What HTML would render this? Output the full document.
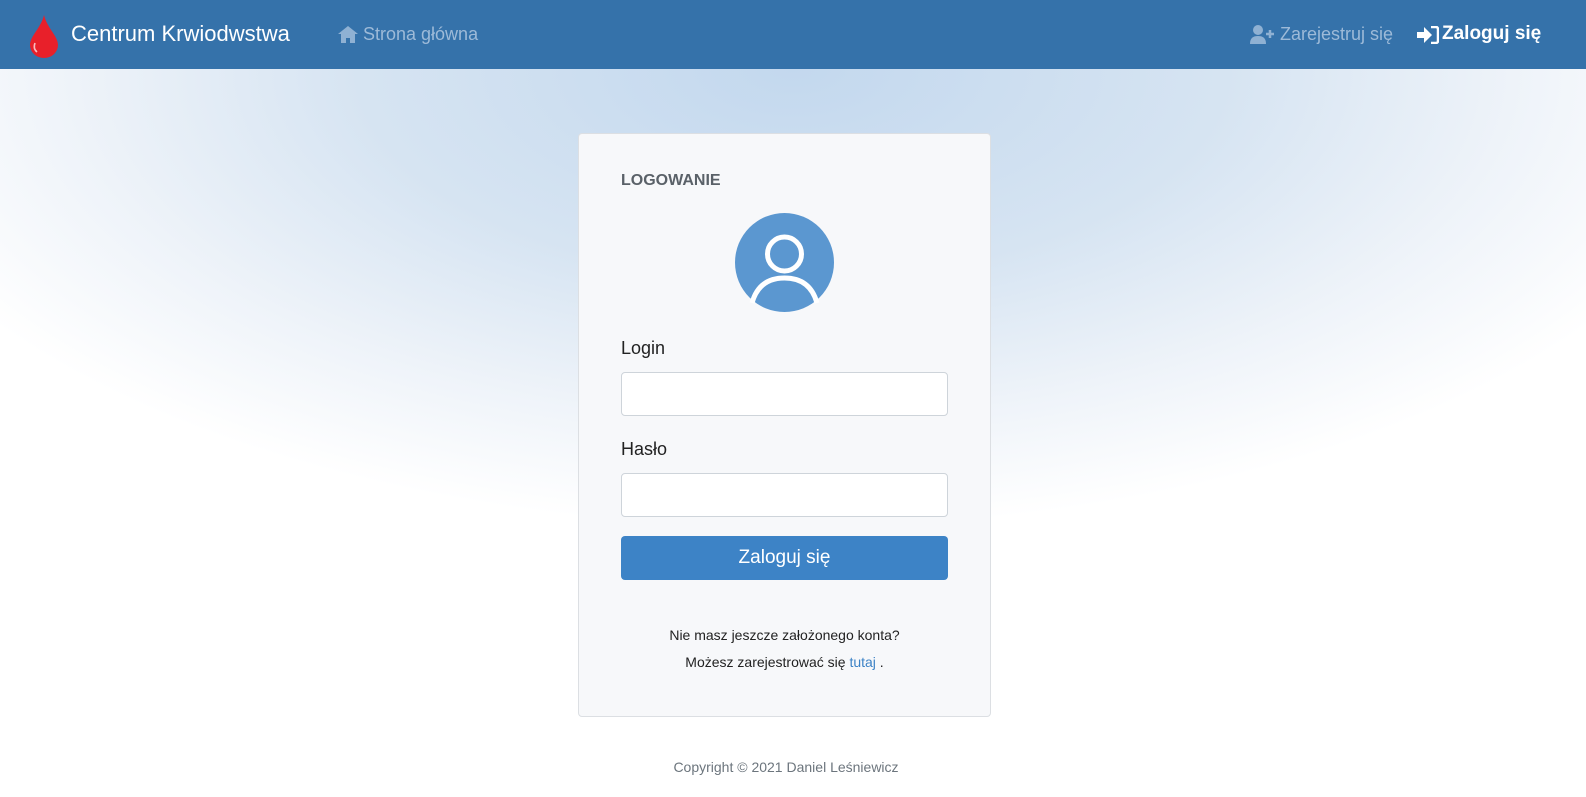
<!DOCTYPE html>
<html><head><meta charset="utf-8"><style>
*{box-sizing:border-box;margin:0;padding:0}
body{width:1586px;height:797px;overflow:hidden;font-family:"Segoe UI","Liberation Sans",sans-serif;background:#fff;position:relative}
.bg{position:absolute;left:0;top:69px;width:1586px;height:728px;background:radial-gradient(ellipse 960px 460px at 793px 0px,#c3d8ee 0%,#d6e4f2 45%,#eef3f9 75%,#fff 100%)}
nav{position:absolute;left:0;top:0;width:1586px;height:69px;background:#3572aa;color:#fff}
.t{position:absolute;white-space:nowrap}
.card{position:absolute;left:578px;top:133px;width:413px;height:584px;background:#f7f8fa;border:1px solid #dcdfe3;border-radius:4px}
.inp{position:absolute;left:621px;width:327px;height:44px;background:#fff;border:1px solid #ced4da;border-radius:4px}
</style></head><body>
<div class="bg"></div>
<nav>
<svg class="t" style="left:28px;top:14px" width="32" height="44" viewBox="0 0 32 44"><path d="M16 1C13 14 2 22 2 31a14 13 0 0 0 28 0C30 22 19 14 16 1z" fill="#e8202a"/><path d="M7 29c-1.5 4-0.5 7 2 9" stroke="#fff" stroke-width="1.6" fill="none" opacity=".7"/></svg>
<div class="t" style="left:71px;top:21px;font-size:22px">Centrum Krwiodwstwa</div>
<svg class="t" style="left:338px;top:26px" width="20" height="17" viewBox="0 0 20 17"><path d="M10 0L0 8h3v9h5v-5h4v5h5V8h3z" fill="#8fb1d3"/></svg>
<div class="t" style="left:363px;top:24px;font-size:18px;color:#9dbad8">Strona główna</div>
<svg class="t" style="left:1250px;top:25px" width="26" height="19" viewBox="0 0 26 19"><circle cx="8" cy="5" r="5" fill="#8fb1d3"/><path d="M0 19c0-6 3-8 8-8s8 2 8 8z" fill="#8fb1d3"/><path d="M20 5v8M16 9h8" stroke="#8fb1d3" stroke-width="2.5"/></svg>
<div class="t" style="left:1280px;top:24px;font-size:18px;color:#9dbad8">Zarejestruj się</div>
<svg class="t" style="left:1417px;top:26px" width="22" height="18" viewBox="0 0 22 18"><path d="M0 6h7V1l8 8-8 8v-5H0z" fill="#fff"/><path d="M14 1h5a2 2 0 0 1 2 2v12a2 2 0 0 1-2 2h-5" stroke="#fff" stroke-width="2.5" fill="none"/></svg>
<div class="t" style="left:1442px;top:23px;font-size:19px;font-weight:bold">Zaloguj się</div>
</nav>
<div class="card"></div>
<div class="t" style="left:621px;top:172px;font-size:16px;font-weight:bold;color:#5a6168">LOGOWANIE</div>
<svg class="t" style="left:735px;top:213px" width="99" height="99" viewBox="0 0 99 99"><circle cx="49.5" cy="49.5" r="49.5" fill="#5b97d0"/><circle cx="49.5" cy="41" r="17" fill="none" stroke="#fff" stroke-width="5"/><path d="M17 90C22 72 34 65 49.5 65S77 72 82 90" fill="none" stroke="#fff" stroke-width="5"/></svg>
<div class="t" style="left:621px;top:338px;font-size:18px;color:#222">Login</div>
<div class="inp" style="top:372px"></div>
<div class="t" style="left:621px;top:439px;font-size:18px;color:#222">Hasło</div>
<div class="inp" style="top:473px"></div>
<div class="t" style="left:621px;top:536px;width:327px;height:44px;background:#3d83c6;border-radius:4px;color:#fff;font-size:19px;text-align:center;line-height:44px">Zaloguj się</div>
<div class="t" style="left:578px;width:413px;top:627px;text-align:center;font-size:14px;color:#222">Nie masz jeszcze założonego konta?</div>
<div class="t" style="left:578px;width:413px;top:654px;text-align:center;font-size:14px;color:#222">Możesz zarejestrować się <span style="color:#3d83c6">tutaj</span> .</div>
<div class="t" style="left:0;width:1572px;top:759px;text-align:center;font-size:14px;color:#6c757d">Copyright © 2021 Daniel Leśniewicz</div>
</body></html>
